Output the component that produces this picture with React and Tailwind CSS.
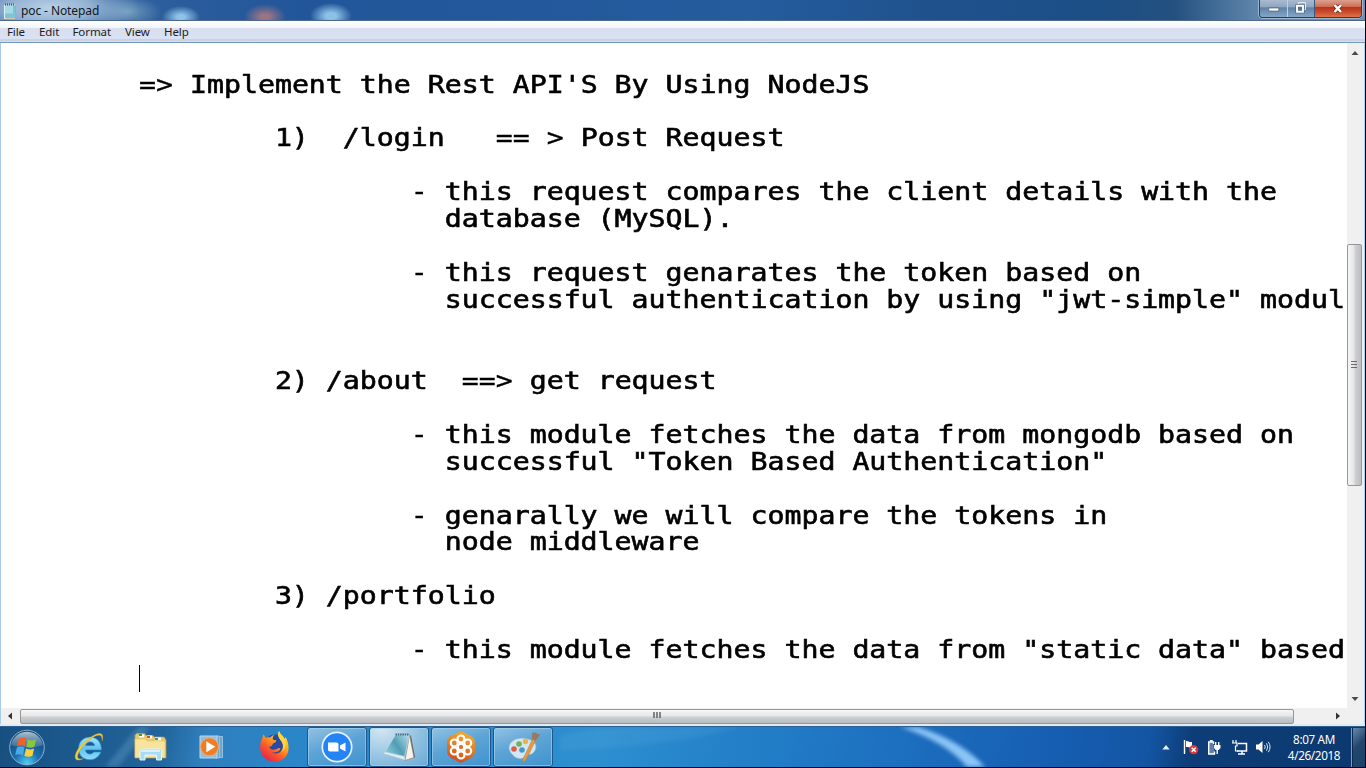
import React from "react";

const LINES = [
  [[0, "=>", 0], [3, "Implement the Rest API'S By Using NodeJS", 1]],
  [],
  [[8, "1)", 1], [12, "/login", 1], [21, "== >", 0], [26, "Post Request", 1]],
  [],
  [[16, "-", 0], [18, "this request compares the client details with the", 1]],
  [[18, "database (MySQL).", 1]],
  [],
  [[16, "-", 0], [18, "this request genarates the token based on", 1]],
  [[18, 'successful authentication by using "jwt-simple" modul', 1]],
  [],
  [],
  [[8, "2)", 1], [11, "/about", 1], [19, "==>", 0], [23, "get request", 1]],
  [],
  [[16, "-", 0], [18, "this module fetches the data from mongodb based on", 1]],
  [[18, 'successful "Token Based Authentication"', 1]],
  [],
  [[16, "-", 0], [18, "genarally we will compare the tokens in", 1]],
  [[18, "node middleware", 1]],
  [],
  [[8, "3)", 1], [11, "/portfolio", 1]],
  [],
  [[16, "-", 0], [18, 'this module fetches the data from "static data" based', 1]],
];

function Line({ parts }) {
  let col = 0;
  return (
    <div className="h-[26.95px]">
      {parts.map(([at, text, heavy]) => {
        const gap = " ".repeat(at - col);
        col = at + text.length;
        return (
          <React.Fragment key={at}>
            {gap}
            <span className={heavy ? "[-webkit-text-stroke:0.6px_#000]" : "[-webkit-text-stroke:0.35px_#000]"}>{text}</span>
          </React.Fragment>
        );
      })}
    </div>
  );
}

function NotepadSmall() {
  return (
    <svg width="14" height="18" viewBox="0 0 14 18">
      <path d="M1.5 3h11v13.5H1.5z" fill="#7fc3d6" stroke="#d9eef2" />
      <path d="M2 3.5h8v8H2z" fill="#a6dbe6" />
      <path d="M12.5 3v14H3" fill="none" stroke="#b9a97c" />
      <path d="M2 2.5h10" stroke="#3b5a72" strokeWidth="2" strokeDasharray="1 1" />
    </svg>
  );
}

function TitleBar() {
  return (
    <header className="flex h-[21px] shrink-0 items-start justify-between overflow-hidden border-b border-[#4f6788] bg-[radial-gradient(ellipse_90px_30px_at_50px_8px,#b9d0e6_0%,#a3bfdbdd_45%,transparent_100%),radial-gradient(ellipse_34px_16px_at_128px_12px,#7ea9c4cc,transparent),radial-gradient(ellipse_19px_11px_at_181px_17px,#8fc3e6_20%,transparent),radial-gradient(ellipse_21px_13px_at_265px_17px,#9a7484_20%,transparent),radial-gradient(ellipse_21px_13px_at_331px_16px,#8cc1e6_25%,transparent),linear-gradient(90deg,#3867a0,#22569a_22%,#245c9e_55%,#1f528d_68%,#1c4f86_80%,#23507f_86%,#5f86ac_92%,#6d8fb2)]">
      <div className="flex items-center gap-[4px] pl-[3px] pt-[1px]">
        <NotepadSmall />
        <h1 className="font-['Noto_Sans'] text-[12px] leading-[19px] tracking-[-0.1px] text-[#101820]">poc - Notepad</h1>
      </div>
      <div className="mr-[3px] flex h-[18px] overflow-hidden rounded-b-[4px] border border-t-0 border-[#223f61] shadow-[0_0_0_1px_#9eb6cd]">
        <div className="flex w-[28px] items-center justify-center border-r border-[#c3d0dd] bg-[linear-gradient(#a8bbcf_0%,#8ea7c1_40%,#5f82a7_46%,#84a6c7)]">
          <svg width="12" height="6" viewBox="0 0 12 6" className="mt-[3px]"><path d="M.8 1h10v3H.8z" fill="#fff" stroke="#4d6076" strokeWidth=".7" /></svg>
        </div>
        <div className="flex w-[27px] items-center justify-center border-r border-[#38597e] bg-[linear-gradient(#a8bbcf_0%,#8ea7c1_40%,#5f82a7_46%,#84a6c7)]">
          <svg width="12" height="13" viewBox="0 0 12 13" className="mb-[2px]"><path d="M3.5 3.5v-2h7v7h-2" fill="none" stroke="#e4ebf2" /><path d="M2 4.8h6v6H2z" fill="none" stroke="#3f5670" strokeWidth="3" /><path d="M2 4.8h6v6H2z" fill="#56718f" stroke="#fff" strokeWidth="1.9" /></svg>
        </div>
        <div className="flex w-[46px] items-center justify-center bg-[linear-gradient(#dca08f_0%,#cf7058_38%,#b93419_44%,#c94a2b_70%,#e0734a)]">
          <svg width="12" height="11" viewBox="0 0 12 11" className="mb-[1px]"><path d="M2.5 2l6.5 7M9 2L2.5 9" stroke="#63332d" strokeWidth="4" /><path d="M2.5 2l6.5 7M9 2L2.5 9" stroke="#fff" strokeWidth="2.5" /></svg>
        </div>
      </div>
    </header>
  );
}

function MenuBar() {
  return (
    <nav className="flex h-[22px] shrink-0 items-center border-b border-[#6f99bf] bg-[linear-gradient(#ffffff_0%,#f0f4fa_33%,#d9dfee_36%,#d9e1f3_84%,#c4c9d6_90%,#dfe6f2_100%)] pl-[7px] font-['Noto_Sans'] text-[11.5px] leading-[20px] tracking-[-0.1px] text-[#1c1c24]">
      <span className="w-[32px]">File</span>
      <span className="w-[33.5px]">Edit</span>
      <span className="w-[52.5px]">Format</span>
      <span className="w-[39px]">View</span>
      <span>Help</span>
    </nav>
  );
}

function VScroll() {
  return (
    <div className="flex w-[17px] shrink-0 flex-col items-center bg-[#f0f0f1] pt-[7px]">
      <svg width="8" height="6" viewBox="0 0 8 6" className="mr-[2px]"><path d="M4 1l3.500 4h-7z" fill="#4a4a4a" /></svg>
      <div className="mr-[2px] mt-[188px] flex h-[242px] w-[15px] items-center justify-center rounded-[2px] border border-[#979797] bg-[linear-gradient(90deg,#f5f5f5,#e6e6e8_45%,#cfd0d3_55%,#bcbdc1)]">
        <svg width="7" height="8" viewBox="0 0 7 8"><path d="M0 .5h6M0 3.500h6M0 6.500h6" stroke="#6b6b6b" /></svg>
      </div>
      <svg width="8" height="6" viewBox="0 0 8 6" className="mb-[6px] mr-[2px] mt-auto"><path d="M4 5l3.500-4h-7z" fill="#4a4a4a" /></svg>
    </div>
  );
}

function HScroll() {
  return (
    <div className="flex h-[16px] items-center bg-[#f0f0f1]">
      <svg width="6" height="8" viewBox="0 0 6 8" className="ml-[6px]"><path d="M1 4l4-3.500v7z" fill="#333" /></svg>
      <div className="ml-[7px] flex h-[15px] w-[1274px] items-center justify-center rounded-[2px] border border-[#979797] bg-[linear-gradient(#f6f6f6,#e6e7e8_45%,#cdd0d3_55%,#b9bbbe)]">
        <svg width="8" height="7" viewBox="0 0 8 7" className="mb-[2px] mr-[1px]"><path d="M1 0v6M4 0v6M7 0v6" stroke="#5a5a5a" strokeWidth="1.4" /></svg>
      </div>
      <svg width="6" height="8" viewBox="0 0 6 8" className="ml-[41px]"><path d="M5 4L1 .5v7z" fill="#333" /></svg>
    </div>
  );
}

function StartOrb() {
  return (
    <svg width="38" height="38" viewBox="0 0 38 38">
      <defs>
        <radialGradient id="orb" cx=".5" cy=".95" r=".8"><stop offset="0" stopColor="#4fd0f5" /><stop offset=".45" stopColor="#1b6fae" /><stop offset="1" stopColor="#174976" /></radialGradient>
        <linearGradient id="shine" x1="0" y1="0" x2="0" y2="1"><stop offset="0" stopColor="#d5e3ec" /><stop offset="1" stopColor="#6f95b4" stopOpacity=".5" /></linearGradient>
      </defs>
      <circle cx="19" cy="19.5" r="17.3" fill="url(#orb)" stroke="#86b6d8" strokeWidth="1" />
      <path d="M3 17A16.3 16.3 0 0 1 35 17C26 20 12 20 3 17z" fill="url(#shine)" opacity=".8" />
      <path d="M11 10.5c3-1.6 5.4-1.2 7.5 0l-1.6 7.7c-2.5-1.4-4.8-1.5-7.7-.2z" fill="#f0622a" />
      <path d="M19.8 11.3c2.8 1.5 5.4 1.4 8.3 0l-1.7 7.5c-2.9 1.5-5.4 1.3-8.1-.1z" fill="#8cc63f" />
      <path d="M8.9 19.5c2.9-1.3 5.2-1.2 7.6.2l-1.7 7.5c-2.4-1.3-4.7-1.3-7.5-.1z" fill="#4ba9e8" />
      <path d="M18 20.4c2.7 1.5 5.2 1.5 8.1.1l-1.7 7.3c-2.9 1.5-5.3 1.3-8-.1z" fill="#fdd03b" />
    </svg>
  );
}

function Explorer() {
  return (
    <svg width="32" height="32" viewBox="0 0 32 32">
      <defs><linearGradient id="ie" x1="0" y1="0" x2="0" y2="1"><stop offset="0" stopColor="#a7e3fb" /><stop offset=".5" stopColor="#62c3f0" /><stop offset="1" stopColor="#8ddcf9" /></linearGradient></defs>
      <path d="M28.5 19H12.5c.3 4.200 5.800 5.500 8.200 1.900h7.200C23.500 33 5.500 30.500 5.500 17.700 5.500 2.500 28.800 1.500 28.500 19zM12.700 14.500h8.800c-.4-4.700-8-4.700-8.800 0z" fill="url(#ie)" stroke="#2485c4" strokeWidth=".7" fillRule="evenodd" />
      <path d="M29 10C31.500 3 28 .5 20.500 4.500 9 10.500.5 22 2.500 27.500c1 2.400 4.500 1.800 8 0-7 2-7.500-2-3-9C13 9.500 24 2.500 27.500 4.500c1.500 1 1.600 3 1.500 5.500z" fill="#f3cf43" stroke="#c99a1f" strokeWidth=".4" />
    </svg>
  );
}

function Folder() {
  return (
    <svg width="34" height="32" viewBox="0 0 34 32">
      <path d="M2 4.500l1.500-2h8l1.500 2h7l1 1.500h10l2 3v18H2z" fill="#e9c96b" stroke="#b99942" strokeWidth=".7" />
      <path d="M6 3.500h5v3H6zM14 4.500h5v3h-5zM22 6.500h6v3h-6z" fill="#f5fafc" />
      <path d="M6 3h3v2H6z" fill="#2ba344" /><path d="M14 5h3v2h-3z" fill="#db4c33" /><path d="M22 7h3v2h-3z" fill="#3e8cc5" />
      <path d="M2 8h10l2 2h18v16.500H2z" fill="#f8e39c" stroke="#e6c667" strokeWidth=".6" />
      <path d="M7 29V19.500c0-1 .5-1.500 1.500-1.500H27c1 0 1.500.500 1.500 1.500V29h-5v-5H12v5z" fill="#a9dcf3" stroke="#e4f5fd" />
      <path d="M8 19h19v2H8z" fill="#d8f1fc" />
    </svg>
  );
}

function MediaPlayer() {
  return (
    <svg width="28" height="26" viewBox="0 0 28 26">
      <path d="M22 2.500h2.500v21H22M18 2h3.500v22H18" fill="#6da6cf" stroke="#a6cde8" strokeWidth=".8" />
      <path d="M2 2h17v22H2z" fill="#8fbfdf" stroke="#b6d9ee" />
      <circle cx="11.5" cy="12.8" r="9" fill="#ee7d25" stroke="#f5aa6d" />
      <path d="M8.300 7.300v11l9-5.500z" fill="#fff" />
    </svg>
  );
}

function Firefox() {
  return (
    <svg width="32" height="32" viewBox="0 0 32 32">
      <defs>
        <linearGradient id="fx" x1=".9" y1="0" x2=".2" y2="1"><stop offset="0" stopColor="#fff04f" /><stop offset=".35" stopColor="#ffb01f" /><stop offset=".65" stopColor="#ff5b27" /><stop offset="1" stopColor="#df1e55" /></linearGradient>
      </defs>
      <circle cx="16" cy="15" r="11.5" fill="#274aa4" />
      <path d="M20 0c1.500 4.500 4 4 5.500 8l1-2c6 10 3.500 24-10.500 24.500C5 30.500 0 22 1.300 13.500 2 9 3.600 7.500 4.300 3.500c1.200 1 1.800 2.200 2.200 3.500 1.500-.8 3.200-.9 4.700-.4 1.200-1.500 2.500-2.200 4-2.600-1.400 2-1.700 3.300-1.300 4.500 1.100.8 3.100.3 3.300 1.300.2 1.800-3.400 1.800-3.800 4-.3 1.500-1.500 1.900-3.300 1.700 1.100 3.600 5.100 4.200 8 2.200 2-1.300 3.800-.4 3.100.8-2.500 3.300-6.500 3.500-8.700 2.400C19 25 25 20 23.700 13.500 22.500 8.500 17 6 20 0z" fill="url(#fx)" />
      <path d="M20 0c-2 5 0 7 2.500 10 2.500 4 2.300 8-.5 11.300 5-3 5.500-8.500 3.500-13.300C24 4 21.500 4 20 0z" fill="#ffd73d" />
    </svg>
  );
}

function Zoom() {
  return (
    <svg width="32" height="32" viewBox="0 0 32 32">
      <circle cx="16" cy="16" r="14.7" fill="#2484f6" stroke="#e7f2fb" strokeWidth="1.7" />
      <path d="M7 11.500h8.500c1.200 0 2 .8 2 2v7H9c-1.200 0-2-.8-2-2zM19 14.500l5.500-3v9l-5.500-3z" fill="#fff" />
    </svg>
  );
}

function NotepadLarge() {
  return (
    <svg width="34" height="32" viewBox="0 0 34 32">
      <defs><linearGradient id="np" x1="0" y1=".8" x2="1" y2=".2"><stop offset="0" stopColor="#93cadb" /><stop offset=".5" stopColor="#4f9db5" /><stop offset="1" stopColor="#a9d5de" /></linearGradient></defs>
      <path d="M27.500 4l4.500 22.500-9 3z" fill="#f5f4ec" stroke="#94846b" strokeWidth=".7" />
      <path d="M28.500 4.500l4 22" stroke="#6d6355" strokeWidth="1" />
      <path d="M13.500 4h14l-5 21.500L3 21z" fill="url(#np)" stroke="#b9dce4" strokeWidth=".6" />
      <path d="M3 21l19.500 4.500.500 3.500-21.500-6.500z" fill="#e2edf0" stroke="#a5c4d1" strokeWidth=".4" />
      <path d="M13.500 3.500h14" stroke="#456779" strokeWidth="1.800" strokeDasharray="1.500 .8" />
    </svg>
  );
}

function Meeting() {
  return (
    <svg width="32" height="32" viewBox="0 0 32 32">
      <defs><linearGradient id="gm" x1=".6" y1="0" x2=".3" y2="1"><stop offset="0" stopColor="#f2ac2c" /><stop offset="1" stopColor="#cf4a1d" /></linearGradient></defs>
      <path d="M12 2q4-3 8 0l6 3q4 2 4 7v8q0 4-4 7l-6 3q-4 3-8 0l-6-3q-4-3-4-7v-8q0-5 4-7z" fill="url(#gm)" />
      <g fill="none" stroke="#fff" strokeWidth="2.2">
        <circle cx="16" cy="8" r="3.500" /><circle cx="22.700" cy="12" r="3.500" /><circle cx="22.700" cy="20" r="3.500" />
        <circle cx="16" cy="24" r="3.500" /><circle cx="9.300" cy="20" r="3.500" /><circle cx="9.300" cy="12" r="3.500" />
        <circle cx="16" cy="16" r="3.200" />
      </g>
      <circle cx="16" cy="16" r="1.800" fill="#e56c22" />
    </svg>
  );
}

function Paint() {
  return (
    <svg width="34" height="32" viewBox="0 0 34 32">
      <path d="M3 18C2 10 12 5 22 8c8 2 10 8 6 13-3 4-8 2-9 4-2 4-7 3-10 1-3-2-5-5-6-8z" fill="#d1e7f3" stroke="#8fb8cf" strokeWidth=".8" />
      <circle cx="8" cy="18" r="2.800" fill="#e35b46" /><circle cx="13" cy="13" r="2.800" fill="#6eb356" />
      <circle cx="19.500" cy="10.500" r="2.700" fill="#efb342" /><circle cx="16" cy="19" r="2.800" fill="#4797c8" />
      <path d="M26.500 8l3 1.500-8.500 17.500c-1 2-4 4.500-4.500 4 0-2 .5-3 1.500-5z" fill="#e59b46" stroke="#b87731" strokeWidth=".5" />
      <path d="M26 8c-.5-3 0-5 1-7l2 1 1-1 1 2h3c-1 3-2.500 5-5 6.500z" fill="#9b7864" />
    </svg>
  );
}

function TaskButton({ children, active }) {
  return (
    <div className={`flex h-[40px] w-[60px] items-center justify-center rounded-[3px] border border-[#20578a] shadow-[inset_0_0_0_1px_#a8d3ef99] ${active ? "bg-[radial-gradient(ellipse_at_20%_0%,#d5e7f2,#8fc0e0_60%,#6aaad5)]" : "bg-[linear-gradient(160deg,#93c2e3,#5da4d6_45%,#3f93cf)]"}`}>
      {children}
    </div>
  );
}

function Tray() {
  return (
    <div className="flex h-[40px] items-center text-white">
      <svg width="8" height="5" viewBox="0 0 8 5"><path d="M4 0l3.700 4.500H.3z" fill="#e6eef7" /></svg>
      <svg width="16" height="16" viewBox="0 0 16 16" className="ml-[13px]">
        <path d="M1.500 1v14" stroke="#fff" strokeWidth="1.400" /><path d="M3 2c2-.5 3 1.500 6 1v5.500c-3 .5-4-1-6-.5z" fill="#fff" />
        <circle cx="10.700" cy="10.700" r="4.600" fill="#d53a39" /><path d="M8.700 8.700l4 4m0-4l-4 4" stroke="#fff" strokeWidth="1.500" />
      </svg>
      <svg width="16" height="17" viewBox="0 0 16 17" className="ml-[8px]">
        <path d="M6.500 5V3H5V1.800H3.500V3H1.700v12h5.800v-2.500" fill="#5f81a5" stroke="#fff" strokeWidth="1.400" />
        <path d="M7 6h6.500v3l-1.700 2H8.700L7 9z" fill="#fff" /><path d="M8.700 3v3.500m3-3.500v3.500M10.200 11v4" stroke="#fff" strokeWidth="1.400" />
      </svg>
      <svg width="17" height="17" viewBox="0 0 17 17" className="ml-[8px]">
        <path d="M7 4.500h8.500v7.500H6M11 12v2.500m-4 .5h7" fill="none" stroke="#fff" strokeWidth="1.500" />
        <path d="M2 1v3m3-3v3M1 4h5v3H4.500v5H7" fill="none" stroke="#fff" strokeWidth="1.200" />
      </svg>
      <svg width="16" height="16" viewBox="0 0 16 16" className="ml-[7px]">
        <path d="M1 5.500h2.500L7.500 2v12l-4-3.500H1z" fill="#fff" /><path d="M9.500 6q1.500 2 0 4M11.500 4.300q2.500 3.700 0 7.400M13.300 2.800q3.500 5.200 0 10.400" fill="none" stroke="#dfe9f3" />
      </svg>
      <div className="ml-[13px] w-[60px] text-center font-['Noto_Sans'] text-[11.7px] leading-[16.5px] tracking-[-0.35px]">
        <div>8:07 AM</div>
        <div>4/26/2018</div>
      </div>
      <div className="ml-[7px] h-[39px] w-[14px] border-l border-[#7f9cba] bg-[linear-gradient(135deg,#6a8cae,#23486f_45%,#1b4069)] shadow-[inset_1px_0_0_#0c2a4e]" />
    </div>
  );
}

function TaskBar() {
  return (
    <footer className="relative h-[41px] shrink-0 overflow-hidden border-b border-black bg-[linear-gradient(100deg,#174f80_0%,#21659c_12%,#2f7fbd_15%,#2a86c8_22%,#2d8fd0_44%,#2380c8_54%,#1d70c0_65%,#165eb2_77%,#1355a3_84%,#0d3d78_87%,#0c386f_100%)]">
      <svg className="absolute left-0 top-0 blur-[2px]" width="1366" height="40" viewBox="0 0 1366 40">
        <path d="M105 40L138 0h12L118 40z" fill="#8fc0e2" opacity=".25" />
        <path d="M560 24Q680 18 740 0H620Q580 2 560 10z" fill="#62b4e6" opacity=".18" />
        <path d="M900 0Q945 14 967 40H985Q962 14 918 0z" fill="#8cc5f6" />
      </svg>
      <div className="relative flex h-[40px] items-center justify-between">
        <div className="flex items-center">
          <div className="ml-[8px] w-[38px]"><StartOrb /></div>
          <div className="ml-[27px] w-[32px]"><Explorer /></div>
          <div className="ml-[28px] w-[34px]"><Folder /></div>
          <div className="ml-[31px] w-[28px]"><MediaPlayer /></div>
          <div className="ml-[33px] w-[32px]"><Firefox /></div>
          <div className="ml-[16px] flex gap-[2px]">
            <TaskButton><Zoom /></TaskButton>
            <TaskButton active><NotepadLarge /></TaskButton>
            <TaskButton><Meeting /></TaskButton>
            <TaskButton><Paint /></TaskButton>
          </div>
        </div>
        <Tray />
      </div>
    </footer>
  );
}

export default function App() {
  return (
    <div className="flex h-[768px] w-[1366px] flex-col overflow-hidden border-r border-black bg-white">
      <TitleBar />
      <MenuBar />
      <div className="flex h-[681px] shrink-0 flex-col border-x border-l-[#a9cbe6] border-r-[#a9d3f0]">
        <div className="flex min-h-0 flex-1">
          <main className="min-w-0 flex-1 overflow-hidden pl-[138px] pt-[28.5px]">
            <div className="w-max origin-top-left scale-x-[1.1755] whitespace-pre font-['DejaVu_Sans_Mono',monospace] text-[24px] leading-[26.95px] text-black">
              {LINES.map((parts, i) => <Line key={i} parts={parts} />)}
            </div>
            <div className="mt-px h-[27px] w-px bg-black" />
          </main>
          <VScroll />
        </div>
        <HScroll />
      </div>
      <div className="h-[3px] shrink-0 border-b border-[#2f5f8d] bg-[#dcebf7]" />
      <TaskBar />
    </div>
  );
}
